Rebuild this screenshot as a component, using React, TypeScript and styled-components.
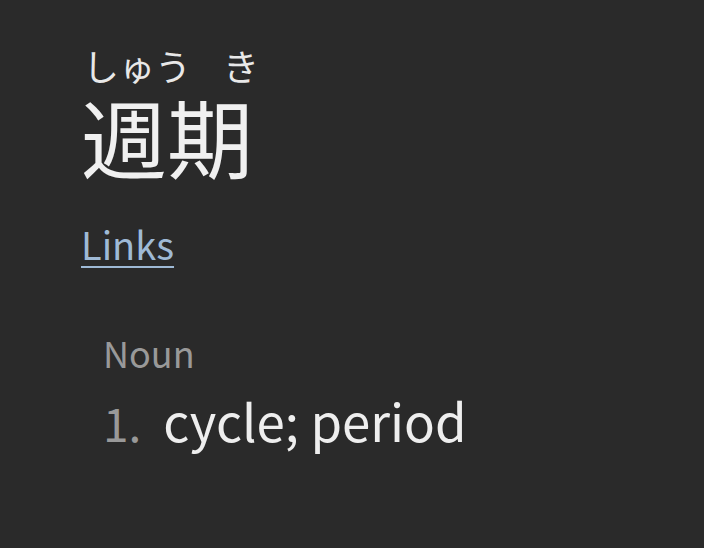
import React from 'react';
import styled, { createGlobalStyle } from 'styled-components';

const GlobalStyle = createGlobalStyle`
  html, body {
    margin: 0;
    padding: 0;
    background: #2a2a2a;
  }
  body {
    font-family: "Noto Sans CJK JP", "Noto Sans", sans-serif;
    color: #eeeeee;
  }
`;

const Page = styled.div`
  width: 704px;
  height: 548px;
  box-sizing: border-box;
  padding: 44px 0 0 81px;
  background: #2a2a2a;
`;

const Word = styled.div`
  display: flex;
  flex-direction: column;
`;

const Furigana = styled.div`
  display: flex;
  gap: 32px;
  padding-left: 2px;
  font-size: 36px;
  line-height: 42px;
  color: #e8e8e8;
`;

const Kanji = styled.div`
  font-size: 86px;
  line-height: 100px;
  color: #f0f0f0;
`;

const LinkText = styled.a`
  display: inline-block;
  margin-top: 33px;
  font-size: 38px;
  line-height: 50px;
  color: #9fbad6;
  text-decoration: underline;
  text-underline-offset: 6px;
  text-decoration-thickness: 2px;
`;

const Meanings = styled.div`
  margin-top: 59px;
  padding-left: 22px;
`;

const PartOfSpeech = styled.div`
  font-size: 36px;
  line-height: 48px;
  color: #999999;
`;

const Meaning = styled.div`
  display: flex;
  align-items: baseline;
  gap: 22px;
  margin-top: 12px;
  font-size: 51px;
  line-height: 64px;
`;

const Number = styled.span`
  color: #999999;
  font-size: 46px;
`;

const Definition = styled.span`
  color: #eeeeee;
`;

export default function App() {
  return (
    <>
      <GlobalStyle />
      <Page>
        <Word>
          <Furigana>
            <span>しゅう</span>
            <span>き</span>
          </Furigana>
          <Kanji>週期</Kanji>
        </Word>
        <LinkText href="#">Links</LinkText>
        <Meanings>
          <PartOfSpeech>Noun</PartOfSpeech>
          <Meaning>
            <Number>1.</Number>
            <Definition>cycle; period</Definition>
          </Meaning>
        </Meanings>
      </Page>
    </>
  );
}
